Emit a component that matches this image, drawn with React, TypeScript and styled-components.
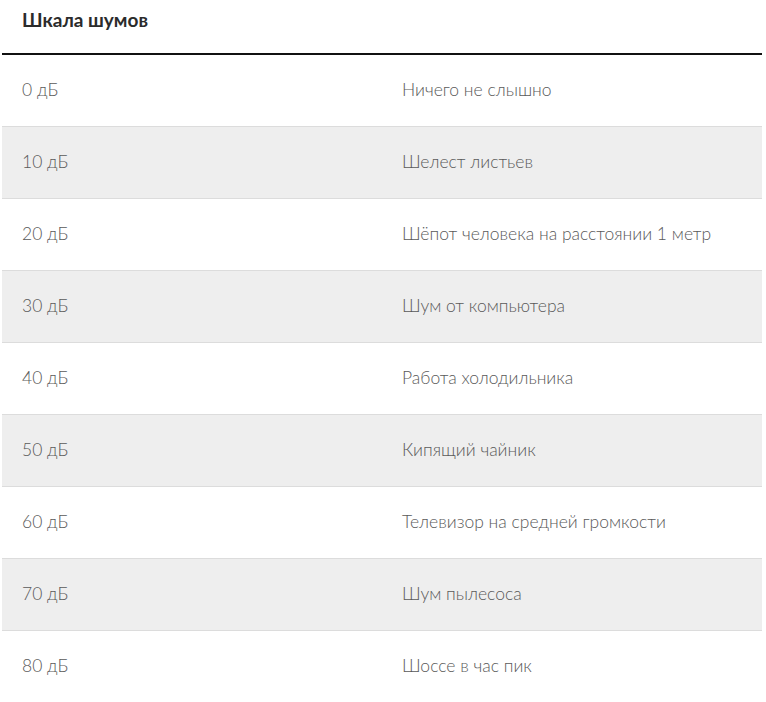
import React from "react";
import styled, { createGlobalStyle } from "styled-components";

const Global = createGlobalStyle`
  html, body { margin: 0; padding: 0; background: #fff; }
  body { font-family: "Lato", "Open Sans", sans-serif; }
`;

const Wrap = styled.div`
  padding: 0 4px 0 2px;
`;

const Title = styled.div`
  height: 55px;
  box-sizing: border-box;
  padding: 8px 20px 0;
  font-size: 19px;
  font-weight: 700;
  color: #2b2b2b;
  border-bottom: 2px solid #111;
  line-height: 24px;
`;

const Row = styled.div<{ $shaded: boolean }>`
  display: grid;
  grid-template-columns: 1fr 1fr;
  height: 72px;
  box-sizing: border-box;
  align-items: center;
  background: ${(p) => (p.$shaded ? "#eeeeee" : "#ffffff")};
  border-bottom: 1px solid #dcdcdc;
`;

const Cell = styled.div`
  padding: 0 20px 2px;
  font-size: 17.5px;
  font-weight: 300;
  color: #5a5a5a;
`;

const rows: [string, string][] = [
  ["0 дБ", "Ничего не слышно"],
  ["10 дБ", "Шелест листьев"],
  ["20 дБ", "Шёпот человека на расстоянии 1 метр"],
  ["30 дБ", "Шум от компьютера"],
  ["40 дБ", "Работа холодильника"],
  ["50 дБ", "Кипящий чайник"],
  ["60 дБ", "Телевизор на средней громкости"],
  ["70 дБ", "Шум пылесоса"],
  ["80 дБ", "Шоссе в час пик"],
];

export default function App() {
  return (
    <Wrap>
      <Global />
      <Title>Шкала шумов</Title>
      {rows.map(([a, b], i) => (
        <Row key={a} $shaded={i % 2 === 1}>
          <Cell>{a}</Cell>
          <Cell>{b}</Cell>
        </Row>
      ))}
    </Wrap>
  );
}
